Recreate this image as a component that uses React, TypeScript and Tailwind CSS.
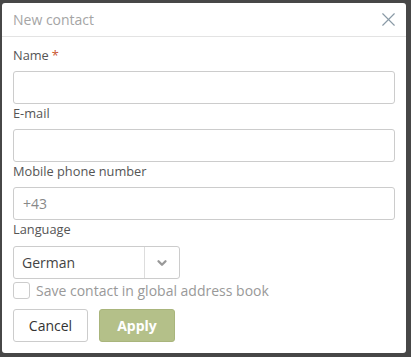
import { X, ChevronDown } from 'lucide-react';

const Field = ({ label, required, placeholder }: { label: string; required?: boolean; placeholder?: string }) => (
  <div className="flex flex-col">
    <label className="h-[18px] text-[12.8px] leading-[18px] text-[#555]">
      {label}
      {required && <span className="ml-[3px] text-[#c9552f]">*</span>}
    </label>
    <input
      placeholder={placeholder}
      className="mt-[7px] h-[33px] rounded-[3px] border border-[#ccc] bg-white px-[9px] text-[14px] text-[#555] placeholder:text-[#888] outline-none"
    />
  </div>
);

export default function App() {
  return (
    <div className="h-[357px] w-[411px] bg-[#474747] pl-[2px] pt-[3px]" style={{ fontFamily: '"Open Sans", sans-serif' }}>
      <div className="h-[350px] w-[404px] rounded-[3px] bg-white">
        {/* Header */}
        <div className="flex h-[34px] items-center justify-between border-b border-[#e3e3e3] pl-[11px] pr-[6px]">
          <span className="text-[14px] text-[#a5a5a5]">New contact</span>
          <X size={23} strokeWidth={1.2} className="text-[#8a9aa6]" />
        </div>

        <div className="flex flex-col px-[11px] pt-[9px]">
          <Field label="Name" required />
          <Field label="E-mail" />
          <Field label="Mobile phone number" placeholder="+43" />
          <div className="flex flex-col">
            <label className="h-[18px] text-[12.8px] leading-[18px] text-[#555]">Language</label>
            <div className="mt-[8px] flex h-[33px] w-[167px] rounded-[3px] border border-[#ccc]">
              <span className="flex flex-1 items-center pl-[8px] text-[14px] text-[#444]">German</span>
              <span className="flex w-[35px] items-center justify-center border-l border-[#ddd]">
                <ChevronDown size={14} strokeWidth={4} className="text-[#999]" />
              </span>
            </div>
          </div>
          <div className="mt-[3px] flex h-[17px] items-center gap-[6px]">
            <span className="h-[17px] w-[17px] shrink-0 rounded-[3px] border border-[#ccc] bg-white" />
            <span className="text-[14px] leading-[17px] text-[#999]">Save contact in global address book</span>
          </div>
          <div className="mt-[10px] flex gap-[11px]">
            <button className="h-[33px] w-[75px] rounded-[3px] border border-[#ccc] bg-white text-[14px] text-[#333]">Cancel</button>
            <button className="h-[33px] w-[76px] rounded-[3px] border border-[#a9b57c] bg-[#b4c089] text-[14px] font-bold text-white">Apply</button>
          </div>
        </div>
      </div>
    </div>
  );
}
